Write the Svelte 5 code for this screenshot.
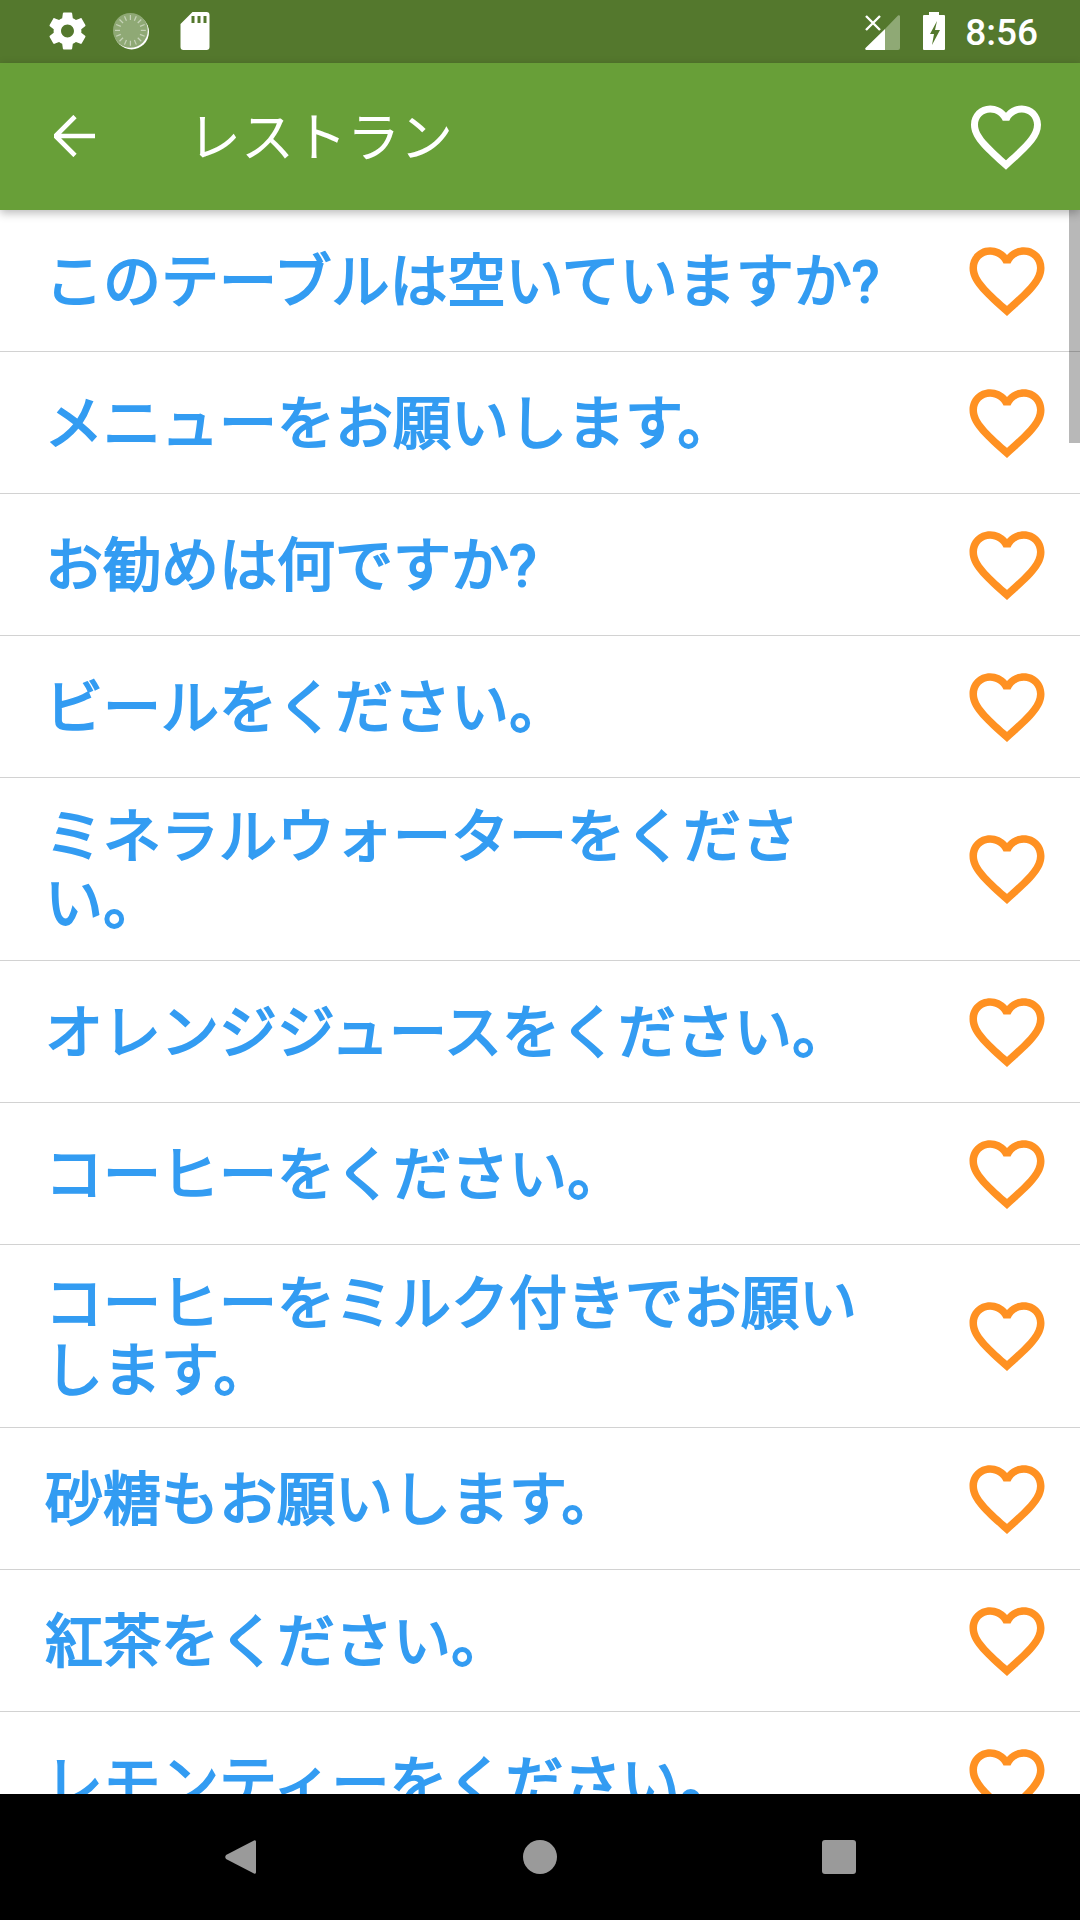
<script>
  const heart = "M16.5 3c-1.74 0-3.41.81-4.5 2.09C10.91 3.81 9.24 3 7.5 3 4.42 3 2 5.42 2 8.5c0 3.78 3.4 6.86 8.55 11.54L12 21.35l1.45-1.32C18.6 15.36 22 12.28 22 8.5 22 5.42 19.58 3 16.5 3zm-4.4 15.55l-.1.1-.1-.1C7.14 14.24 4 11.39 4 8.5 4 6.5 5.5 5 7.5 5c1.54 0 3.04.99 3.57 2.36h1.87C13.46 5.99 14.96 5 16.5 5c2 0 3.5 1.5 3.5 3.5 0 2.89-3.14 5.74-7.9 10.05z";
  const gear = "M19.43 12.98c.04-.32.07-.64.07-.98s-.03-.66-.07-.98l2.11-1.65c.19-.15.24-.42.12-.64l-2-3.46c-.12-.22-.39-.3-.61-.22l-2.49 1c-.52-.4-1.08-.73-1.69-.98l-.38-2.65C14.46 2.18 14.25 2 14 2h-4c-.25 0-.46.18-.49.42l-.38 2.65c-.61.25-1.17.59-1.69.98l-2.49-1c-.23-.09-.49 0-.61.22l-2 3.46c-.13.22-.07.49.12.64l2.11 1.65c-.04.32-.07.65-.07.98s.03.66.07.98l-2.11 1.65c-.19.15-.24.42-.12.64l2 3.46c.12.22.39.3.61.22l2.49-1c.52.4 1.08.73 1.69.98l.38 2.65c.03.24.24.42.49.42h4c.25 0 .46-.18.49-.42l.38-2.65c.61-.25 1.17-.59 1.69-.98l2.49 1c.23.09.49 0 .61-.22l2-3.46c.12-.22.07-.49-.12-.64l-2.11-1.65zM12 15.5c-1.93 0-3.5-1.57-3.5-3.5s1.57-3.5 3.5-3.5 3.5 1.57 3.5 3.5-1.57 3.5-3.5 3.5z";
  const rows = [
    "このテーブルは空いていますか?",
    "メニューをお願いします。",
    "お勧めは何ですか?",
    "ビールをください。",
    "ミネラルウォーターをください。",
    "オレンジジュースをください。",
    "コーヒーをください。",
    "コーヒーをミルク付きでお願いします。",
    "砂糖もお願いします。",
    "紅茶をください。",
    "レモンティーをください。"
  ];
  const ticks = Array.from({ length: 16 }, (_, i) => i * 22.5);
</script>

<div class="screen">
  <header class="status">
    <div class="status-left">
      <svg class="gear" viewBox="2 2 20 20"><path d={gear} fill="#fff" /></svg>
      <svg class="sync" viewBox="0 0 36 38">
        <circle cx="18.6" cy="20" r="17.4" fill="#fff" />
        <circle cx="17.4" cy="18.4" r="17.4" fill="#8fa975" />
        {#each ticks as t}
          <line x1="17.4" y1="3" x2="17.4" y2="8" stroke="#c6d3b8" stroke-width="1.2" transform="rotate({t} 17.4 18.4)" />
        {/each}
      </svg>
      <svg class="sd" viewBox="0 0 29 38">
        <path fill="#fff" fill-rule="evenodd" d="M12 0h14a3 3 0 0 1 3 3v32a3 3 0 0 1-3 3H3a3 3 0 0 1-3-3V12zM11 4v7h3V4zm6 0v7h3V4zm6 0v7h3V4z" />
      </svg>
    </div>
    <div class="status-right">
      <svg class="signal" viewBox="0 0 35 35">
        <path fill="#8fa975" d="M20 14 33 0.5a1.2 1.2 0 0 1 2 .8V33a2 2 0 0 1-2 2H20z" />
        <path fill="#fff" d="M20 14V35H1.5a1.2 1.2 0 0 1-1-2z" />
        <path stroke="#fff" stroke-width="2.4" fill="none" d="M1 1 15 15M15 1 1 15" />
      </svg>
      <svg class="battery" viewBox="0 0 22 38">
        <path fill="#fff" fill-rule="evenodd" d="M6 0h10v3h5a1 1 0 0 1 1 1v33a1 1 0 0 1-1 1H1a1 1 0 0 1-1-1V4a1 1 0 0 1 1-1h5zM14 9 7 22h4l-2 11 8-15h-5z" />
      </svg>
      <span class="time">8:56</span>
    </div>
  </header>

  <nav class="toolbar">
    <svg class="back" viewBox="0 0 41 42"><path d="M1.5 21H41M21 1.5 1.5 21 21 40.5" fill="none" stroke="#fff" stroke-width="4.6" /></svg>
    <h1 class="title">レストラン</h1>
    <svg class="top-heart" viewBox="0 0 24 24"><path d={heart} fill="#fff" /></svg>
  </nav>

  <main class="list">
    {#each rows as r}
      <div class="row">
        <p class="phrase">{r}</p>
        <svg class="heart" viewBox="0 0 24 24"><path d={heart} fill="#ff9122" /></svg>
      </div>
    {/each}
    <div class="scrollbar"></div>
  </main>

  <footer class="navbar">
    <svg class="nav-ic" viewBox="0 0 34 36"><path d="M30 1.5a1.5 1.5 0 0 1 2 1v31a1.5 1.5 0 0 1-2 1L2 20a3 3 0 0 1 0-4z" fill="#9a9a9a" /></svg>
    <svg class="nav-ic" viewBox="0 0 34 36"><circle cx="17" cy="18" r="17" fill="#9a9a9a" /></svg>
    <svg class="nav-ic" viewBox="0 0 34 36"><rect x="0" y="1" width="34" height="34" rx="3" fill="#9a9a9a" /></svg>
  </footer>
</div>

<style>
  :global(body) {
    margin: 0;
    background: #fff;
  }
  .screen {
    width: 1080px;
    height: 1920px;
    display: flex;
    flex-direction: column;
    overflow: hidden;
    font-family: Roboto, "Noto Sans CJK JP", sans-serif;
  }
  .status {
    height: 63px;
    flex: none;
    background: #54782d;
    display: flex;
    justify-content: space-between;
    align-items: flex-start;
    padding: 0 42px 0 49px;
    box-sizing: border-box;
  }
  .status-left {
    display: flex;
    align-items: flex-start;
    gap: 27px;
    padding-top: 12px;
  }
  .gear { width: 37px; height: 38px; display: block; }
  .sync { width: 36px; height: 38px; display: block; }
  .sd { width: 30px; height: 38px; display: block; margin-left: 4px; }
  .status-right {
    display: flex;
    align-items: flex-start;
    padding-top: 12px;
    color: #fff;
  }
  .signal { width: 35px; height: 35px; margin-top: 3px; display: block; }
  .battery { width: 22px; height: 38px; margin-left: 23px; display: block; }
  .time {
    font-weight: 500;
    font-size: 37px;
    line-height: 42px;
    margin-left: 20px;
  }
  .toolbar {
    height: 147px;
    flex: none;
    background: #689f38;
    display: flex;
    align-items: center;
    padding: 0 32px 0 54px;
    box-sizing: border-box;
    position: relative;
    z-index: 2;
    box-shadow: 0 3px 9px rgba(0, 0, 0, 0.28);
  }
  .back { width: 41px; height: 42px; display: block; margin-top: -1px; }
  .title {
    margin: 4px 0 0 93px;
    flex: 1;
    font-size: 53px;
    font-weight: 400;
    line-height: 70px;
    color: #fff;
  }
  .top-heart { width: 84px; height: 84px; display: block; }
  .list {
    flex: 1;
    min-height: 0;
    overflow: hidden;
    position: relative;
    background: #fff;
  }
  .row {
    min-height: 142px;
    box-sizing: border-box;
    border-bottom: 1px solid #d2d2d2;
    display: flex;
    align-items: center;
    padding: 0 28px 0 45px;
  }
  .phrase {
    flex: 1;
    margin: 0;
    padding: 26px 0 22px;
    max-width: 850px;
    font-size: 58px;
    line-height: 67px;
    font-weight: 400;
    -webkit-text-stroke: 2px #339cf2;
    color: #339cf2;
  }
  .heart { width: 90px; height: 90px; flex: none; display: block; margin-left: auto; }
  .scrollbar {
    position: absolute;
    top: 0;
    right: 0;
    width: 11px;
    height: 233px;
    background: rgba(0, 0, 0, 0.28);
  }
  .navbar {
    height: 126px;
    flex: none;
    background: #000;
    display: flex;
    align-items: center;
    justify-content: center;
    gap: 265px;
    position: relative;
    z-index: 2;
  }
  .nav-ic { width: 34px; height: 36px; display: block; }
</style>
